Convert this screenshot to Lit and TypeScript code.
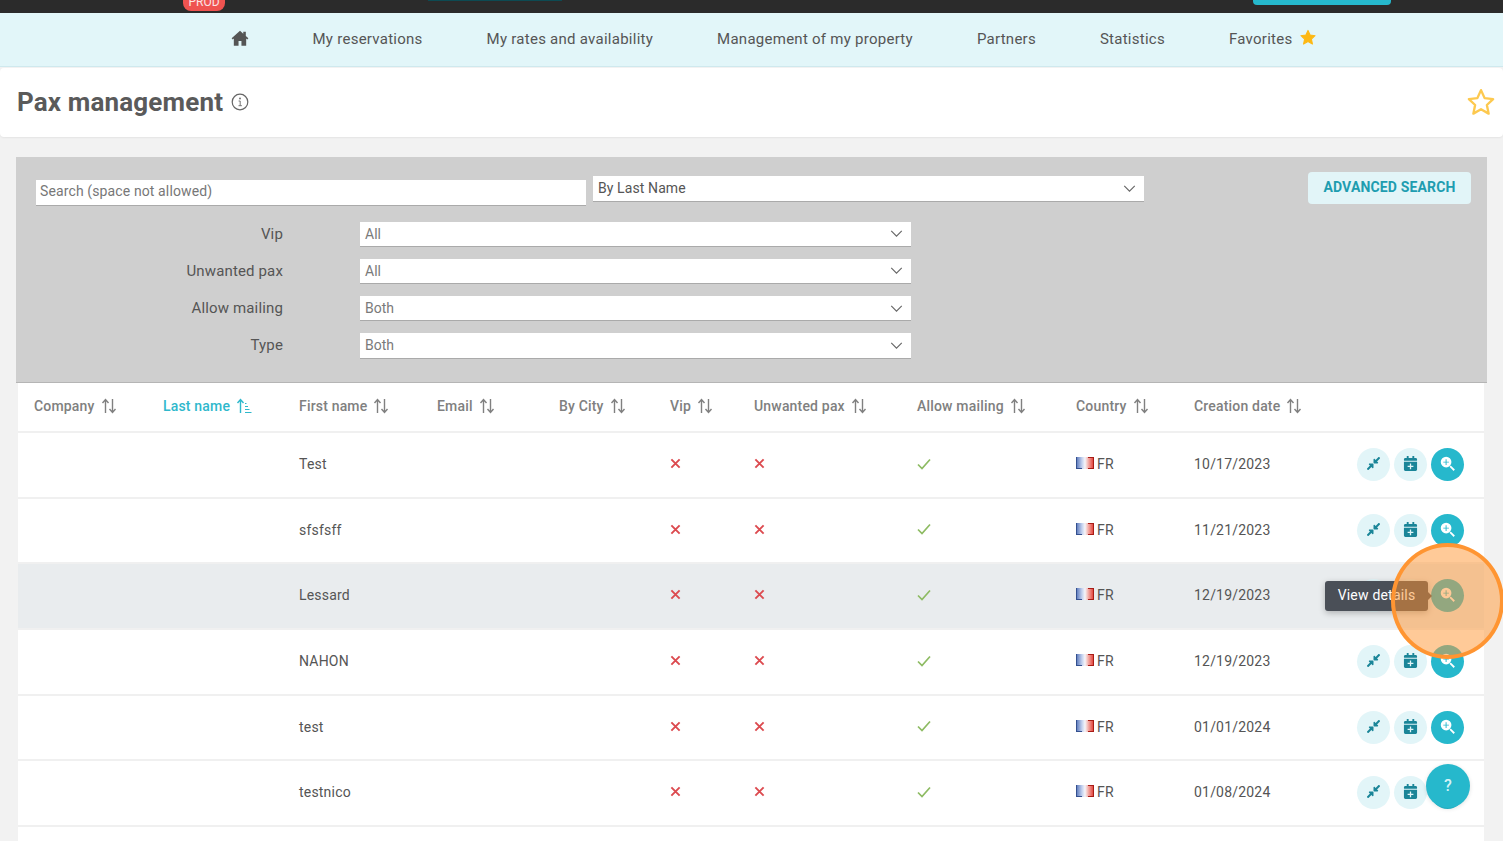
import { LitElement, html, css, svg } from 'lit';
import { customElement } from 'lit/decorators.js';

const navItems = ['My reservations', 'My rates and availability', 'Management of my property', 'Partners', 'Statistics'];

const filters = [
  { label: 'Vip', value: 'All' },
  { label: 'Unwanted pax', value: 'All' },
  { label: 'Allow mailing', value: 'Both' },
  { label: 'Type', value: 'Both' },
];

const columns = ['Company', 'Last name', 'First name', 'Email', 'By City', 'Vip', 'Unwanted pax', 'Allow mailing', 'Country', 'Creation date'];

const rows = [
  { first: 'Test', date: '10/17/2023' },
  { first: 'sfsfsff', date: '11/21/2023' },
  { first: 'Lessard', date: '12/19/2023', hover: true },
  { first: 'NAHON', date: '12/19/2023' },
  { first: 'test', date: '01/01/2024' },
  { first: 'testnico', date: '01/08/2024' },
];

const chevron = html`<svg class="chev" viewBox="0 0 14 8"><path d="M1 1l6 6 6-6" fill="none" stroke="#666" stroke-width="1.3"/></svg>`;

const sortIcon = (active: boolean) => html`<svg class="sort" viewBox="0 0 16 16">
  <path d="M4.5 15V2M1.5 5l3-3.5 3 3.5" fill="none" stroke="currentColor" stroke-width="1.4"/>
  ${active
    ? svg`<path d="M9 14.5h6.500M9 11.500h4.500M9 8.500h3M9 5.500h1.500" fill="none" stroke="currentColor" stroke-width="1"/>`
    : svg`<path d="M11.500 1v13M8.500 11l3 3.500 3-3.500" fill="none" stroke="currentColor" stroke-width="1.400"/>`}
</svg>`;

const cross = html`<svg class="mark" viewBox="0 0 12 12"><path d="M1.500 1.500l9 9M10.500 1.500l-9 9" fill="none" stroke="#dc4a4f" stroke-width="2.100"/></svg>`;
const check = html`<svg class="mark check" viewBox="0 0 14 12"><path d="M1 6.500l4 4 8-9" fill="none" stroke="#8dbb62" stroke-width="1.700"/></svg>`;

const flag = html`<svg class="flag" viewBox="0 0 18 12">
  <defs><linearGradient id="fl" x1="0" x2="1" y1="0" y2="0">
    <stop offset="0" stop-color="#4f6fb5"/><stop offset=".33" stop-color="#c3d0ee"/><stop offset=".5" stop-color="#f6f6fa"/>
    <stop offset=".67" stop-color="#f4b3ae"/><stop offset="1" stop-color="#e0332b"/></linearGradient></defs>
  <rect width="18" height="12" fill="url(#fl)"/>
  <path d="M.5 0v12M0 11.500h6" stroke="#34508f" fill="none"/>
  <path d="M17.500 0v12M12 11.500h6M12 .5h6" stroke="#a81c16" fill="none"/>
</svg>`;

const compressIcon = html`<svg viewBox="0 0 448 512"><path fill="currentColor" d="M4.686 427.314L104 328l-32.922-31.029C55.958 281.851 66.666 256 88.048 256h112C213.303 256 224 266.745 224 280v112c0 21.382-25.803 32.090-40.922 16.971L152 376l-99.314 99.314c-6.248 6.248-16.379 6.248-22.627 0L4.686 449.941c-6.248-6.248-6.248-16.379 0-22.627zM443.314 84.686L344 184l32.922 31.029c15.120 15.120 4.412 40.971-16.970 40.971h-112C234.697 256 224 245.255 224 232V120c0-21.382 25.803-32.090 40.922-16.971L296 136l99.314-99.314c6.248-6.248 16.379-6.248 22.627 0l25.373 25.373c6.248 6.248 6.248 16.379 0 22.627z"/></svg>`;
const calendarIcon = html`<svg viewBox="0 0 448 512"><path fill="currentColor" d="M436 160H12c-6.600 0-12-5.400-12-12v-36c0-26.500 21.500-48 48-48h48V12c0-6.600 5.400-12 12-12h40c6.600 0 12 5.400 12 12v52h128V12c0-6.600 5.400-12 12-12h40c6.600 0 12 5.400 12 12v52h48c26.500 0 48 21.500 48 48v36c0 6.600-5.400 12-12 12zM12 192h424c6.600 0 12 5.400 12 12v260c0 26.500-21.500 48-48 48H48c-26.500 0-48-21.500-48-48V204c0-6.600 5.400-12 12-12zm304 142h-70v-70c0-4-3-7-7-7h-30c-4 0-7 3-7 7v70h-70c-4 0-7 3-7 7v30c0 4 3 7 7 7h70v70c0 4 3 7 7 7h30c4 0 7-3 7-7v-70h70c4 0 7-3 7-7v-30c0-4-3-7-7-7z"/></svg>`;
const zoomIcon = html`<svg viewBox="0 0 16 16">
  <path fill="currentColor" fill-rule="evenodd" d="M6.500.8a5.700 5.700 0 1 1 0 11.400 5.700 5.700 0 0 1 0-11.400zM6 3.500V6H3.500v1H6v2.500h1V7h2.500V6H7V3.500z"/>
  <path d="M10.800 10.800l4.400 4.400" stroke="currentColor" stroke-width="1.900" fill="none"/>
</svg>`;

@customElement('app-root')
export class AppRoot extends LitElement {
  static styles = css`
    :host {
      display: block;
      position: relative;
      height: 841px;
      overflow: hidden;
      background: #f2f2f2;
      font-family: Roboto, 'Liberation Sans', sans-serif;
      font-size: 14px;
      color: #555;
    }
    .topbar {
      height: 13px;
      background: #2b2b2b;
      position: relative;
    }
    .prod {
      position: absolute;
      left: 183px;
      bottom: 2px;
      width: 42px;
      height: 16px;
      border-radius: 0 0 8px 8px;
      background: #ef5350;
      color: #fbe4e4;
      font-size: 12px;
      line-height: 15px;
      text-align: center;
    }
    .top-strip {
      position: absolute;
      left: 428px;
      top: 0;
      width: 134px;
      height: 1px;
      background: #0d4a52;
    }
    .top-btn {
      position: absolute;
      left: 1253px;
      top: 0;
      width: 138px;
      height: 5px;
      border-radius: 0 0 4px 4px;
      background: #26b8cc;
    }
    nav {
      height: 54px;
      background: #e2f6f9;
      border-bottom: 1px solid #cfe9ee;
      display: flex;
      align-items: center;
      justify-content: center;
      gap: 64px;
      font-size: 15px;
      letter-spacing: 0.26px;
      color: #555;
      padding: 0 0 2px 45px;
      box-sizing: border-box;
    }
    nav .home {
      width: 18px;
      height: 16px;
      margin-top: -2px;
      color: #555;
    }
    nav .fav {
      display: flex;
      align-items: center;
      gap: 7px;
    }
    nav .fav svg {
      width: 18px;
      height: 17px;
      margin-top: -3px;
    }
    .title-card {
      height: 69px;
      margin-top: 1px;
      background: #fff;
      border-radius: 4px;
      box-shadow: 0 1px 2px rgba(0, 0, 0, 0.06);
      display: flex;
      align-items: center;
      padding: 0 7px 2px 17px;
      box-sizing: border-box;
    }
    h1 {
      margin: 0;
      font-size: 26px;
      font-weight: 700;
      letter-spacing: 0.15px;
      color: #5a5a5a;
    }
    .info {
      width: 18px;
      height: 18px;
      margin-left: 8px;
    }
    .title-star {
      width: 30px;
      height: 30px;
      margin-left: auto;
    }
    .content {
      margin: 20px 16px 0;
    }
    .panel {
      background: #cfcfcf;
      height: 226px;
      box-sizing: border-box;
      padding: 15px 16px 0 20px;
      border-bottom: 1px solid #b5b5b5;
    }
    .panel-top {
      display: flex;
      align-items: flex-start;
    }
    .search {
      width: 550px;
      height: 25.5px;
      margin-top: 8px;
      background: #fff;
      border-bottom: 1px solid #aaa;
      padding-left: 4px;
      box-sizing: border-box;
      line-height: 22px;
      letter-spacing: 0.12px;
      color: #777;
    }
    .select {
      background: #fff;
      border-bottom: 1px solid #aaa;
      height: 25.5px;
      box-sizing: border-box;
      width: 551px;
      display: flex;
      align-items: center;
      justify-content: space-between;
      padding: 0 8px 0 5px;
      color: #7a7a7a;
    }
    .by {
      margin: 4px 0 0 7px;
      color: #555;
      letter-spacing: 0.1px;
    }
    .chev {
      width: 13px;
      height: 7px;
    }
    .adv {
      margin-left: auto;
      width: 163px;
      height: 32px;
      border-radius: 4px;
      background: #e2f5f8;
      color: #1e9db0;
      font-weight: 700;
      letter-spacing: 0.15px;
      display: flex;
      align-items: center;
      justify-content: center;
      padding-bottom: 2px;
      box-sizing: border-box;
    }
    .filters {
      display: grid;
      grid-template-columns: 247px 551px;
      grid-auto-rows: 25.5px;
      column-gap: 77px;
      row-gap: 11.7px;
      margin-top: 16px;
    }
    .filters label {
      text-align: right;
      font-size: 15px;
      letter-spacing: 0.15px;
      line-height: 25.5px;
    }
    .table {
      margin: 0 3px 0 2px;
      background: #fff;
      height: 460px;
    }
    .row {
      display: grid;
      grid-template-columns: 129px 136px 138px 122px 111px 84px 163px 159px 118px 1fr;
      padding: 0 0 1.6px 16px;
      align-items: center;
      height: 65.7px;
      box-sizing: border-box;
      border-bottom: 2px solid #f0f0f0;
      position: relative;
      letter-spacing: 0.2px;
    }
    .head {
      height: 50px;
      padding-bottom: 2px;
      color: #808080;
      font-weight: 500;
      letter-spacing: 0.18px;
    }
    .head .active {
      color: #2fb8cc;
    }
    .head > div {
      display: flex;
      align-items: center;
      gap: 6px;
    }
    .sort {
      width: 16px;
      height: 16px;
    }
    .row.hover {
      background: #e9ecee;
    }
    .mark {
      width: 11px;
      height: 11px;
      display: block;
      margin-top: -1px;
    }
    .check {
      width: 14px;
      height: 12px;
    }
    .country {
      display: flex;
      align-items: center;
      gap: 3px;
    }
    .flag {
      width: 18px;
      height: 12px;
      margin-top: -2px;
    }
    .actions {
      position: absolute;
      right: 20px;
      top: 15px;
      display: flex;
      gap: 4px;
    }
    .act {
      width: 33px;
      height: 33px;
      border-radius: 50%;
      background: #e2f5f8;
      color: #1a8598;
      display: flex;
      align-items: center;
      justify-content: center;
      padding-bottom: 2px;
      box-sizing: border-box;
    }
    .act svg {
      width: 15px;
      height: 15px;
    }
    .act.primary {
      background: #26b8cc;
      color: #fff;
    }
    .tooltip {
      position: absolute;
      left: 1325px;
      top: 581px;
      width: 103px;
      height: 30px;
      border-radius: 3px;
      background: #4a4f57;
      color: #fff;
      line-height: 29px;
      letter-spacing: 0.2px;
      text-align: center;
      box-shadow: 0 2px 6px rgba(0, 0, 0, 0.25);
    }
    .tooltip::after {
      content: '';
      position: absolute;
      right: -4px;
      top: 11px;
      border-left: 4px solid #4a4f57;
      border-top: 4px solid transparent;
      border-bottom: 4px solid transparent;
    }
    .spot {
      position: absolute;
      left: 1391px;
      top: 543px;
      width: 113px;
      height: 116px;
      box-sizing: border-box;
      border-radius: 50%;
      border: 4px solid #ff9532;
      background: rgba(255, 149, 50, 0.5);
    }
    .fab {
      position: absolute;
      left: 1426px;
      top: 764px;
      width: 44px;
      height: 44px;
      border-radius: 50%;
      background: #26b8cc;
      color: #d6f2f6;
      font-size: 16px;
      font-weight: 500;
      line-height: 43px;
      text-align: center;
      box-shadow: 0 1px 4px rgba(0, 0, 0, 0.12);
    }
  `;

  render() {
    return html`
      <div class="topbar">
        <div class="prod">PROD</div>
        <div class="top-strip"></div>
        <div class="top-btn"></div>
      </div>
      <nav>
        <svg class="home" viewBox="0 0 24 22"><path fill="currentColor" d="M12 1 .5 11.500 2 13l1.500-1.300V21.500H10V15h4v6.500h6.500V11.700L22 13l1.500-1.500-3.500-3.200V2.500h-3.500v2.600z"/></svg>
        ${navItems.map((n) => html`<span>${n}</span>`)}
        <span class="fav">Favorites
          <svg viewBox="0 0 24 24"><path fill="#fdb813" stroke="#fdb813" stroke-width="1.500" stroke-linejoin="round" d="M12 2l3 6.600 7 .8-5.200 4.800 1.500 7.100-6.300-3.600-6.300 3.600 1.500-7.100L2 9.400l7-.8z"/></svg>
        </span>
      </nav>
      <div class="title-card">
        <h1>Pax management</h1>
        <svg class="info" viewBox="0 0 18 18"><circle cx="9" cy="9" r="7.800" fill="none" stroke="#666" stroke-width="1.200"/><path d="M7.600 8h1.600v4.500M7.500 12.700h3.400" fill="none" stroke="#666" stroke-width=".9"/><circle cx="9" cy="5.500" r=".9" fill="#666"/></svg>
        <svg class="title-star" viewBox="0 0 24 24"><path fill="none" stroke="#fdc94f" stroke-width="1.900" stroke-linejoin="round" d="M12 2.500l2.900 6.400 6.800.8-5 4.700 1.400 6.900-6.100-3.500-6.100 3.500 1.400-6.900-5-4.700 6.800-.8z"/></svg>
      </div>
      <div class="content">
        <div class="panel">
          <div class="panel-top">
            <div class="search">Search (space not allowed)</div>
            <div class="select by">By Last Name ${chevron}</div>
            <div class="adv">ADVANCED SEARCH</div>
          </div>
          <div class="filters">
            ${filters.map(
              (f) => html`<label>${f.label}</label><div class="select">${f.value} ${chevron}</div>`
            )}
          </div>
        </div>
        <div class="table">
          <div class="row head">
            ${columns.map(
              (c) => html`<div class=${c === 'Last name' ? 'active' : ''}>${c} ${sortIcon(c === 'Last name')}</div>`
            )}
          </div>
          ${rows.map(
            (r) => html`
              <div class="row ${r.hover ? 'hover' : ''}">
                <div></div>
                <div></div>
                <div>${r.first}</div>
                <div></div>
                <div></div>
                <div>${cross}</div>
                <div>${cross}</div>
                <div>${check}</div>
                <div class="country">${flag} FR</div>
                <div>${r.date}</div>
                <div class="actions">
                  <div class="act">${compressIcon}</div>
                  <div class="act">${calendarIcon}</div>
                  <div class="act primary">${zoomIcon}</div>
                </div>
              </div>
            `
          )}
        </div>
      </div>
      <div class="tooltip">View details</div>
      <div class="spot"></div>
      <div class="fab">?</div>
    `;
  }
}
